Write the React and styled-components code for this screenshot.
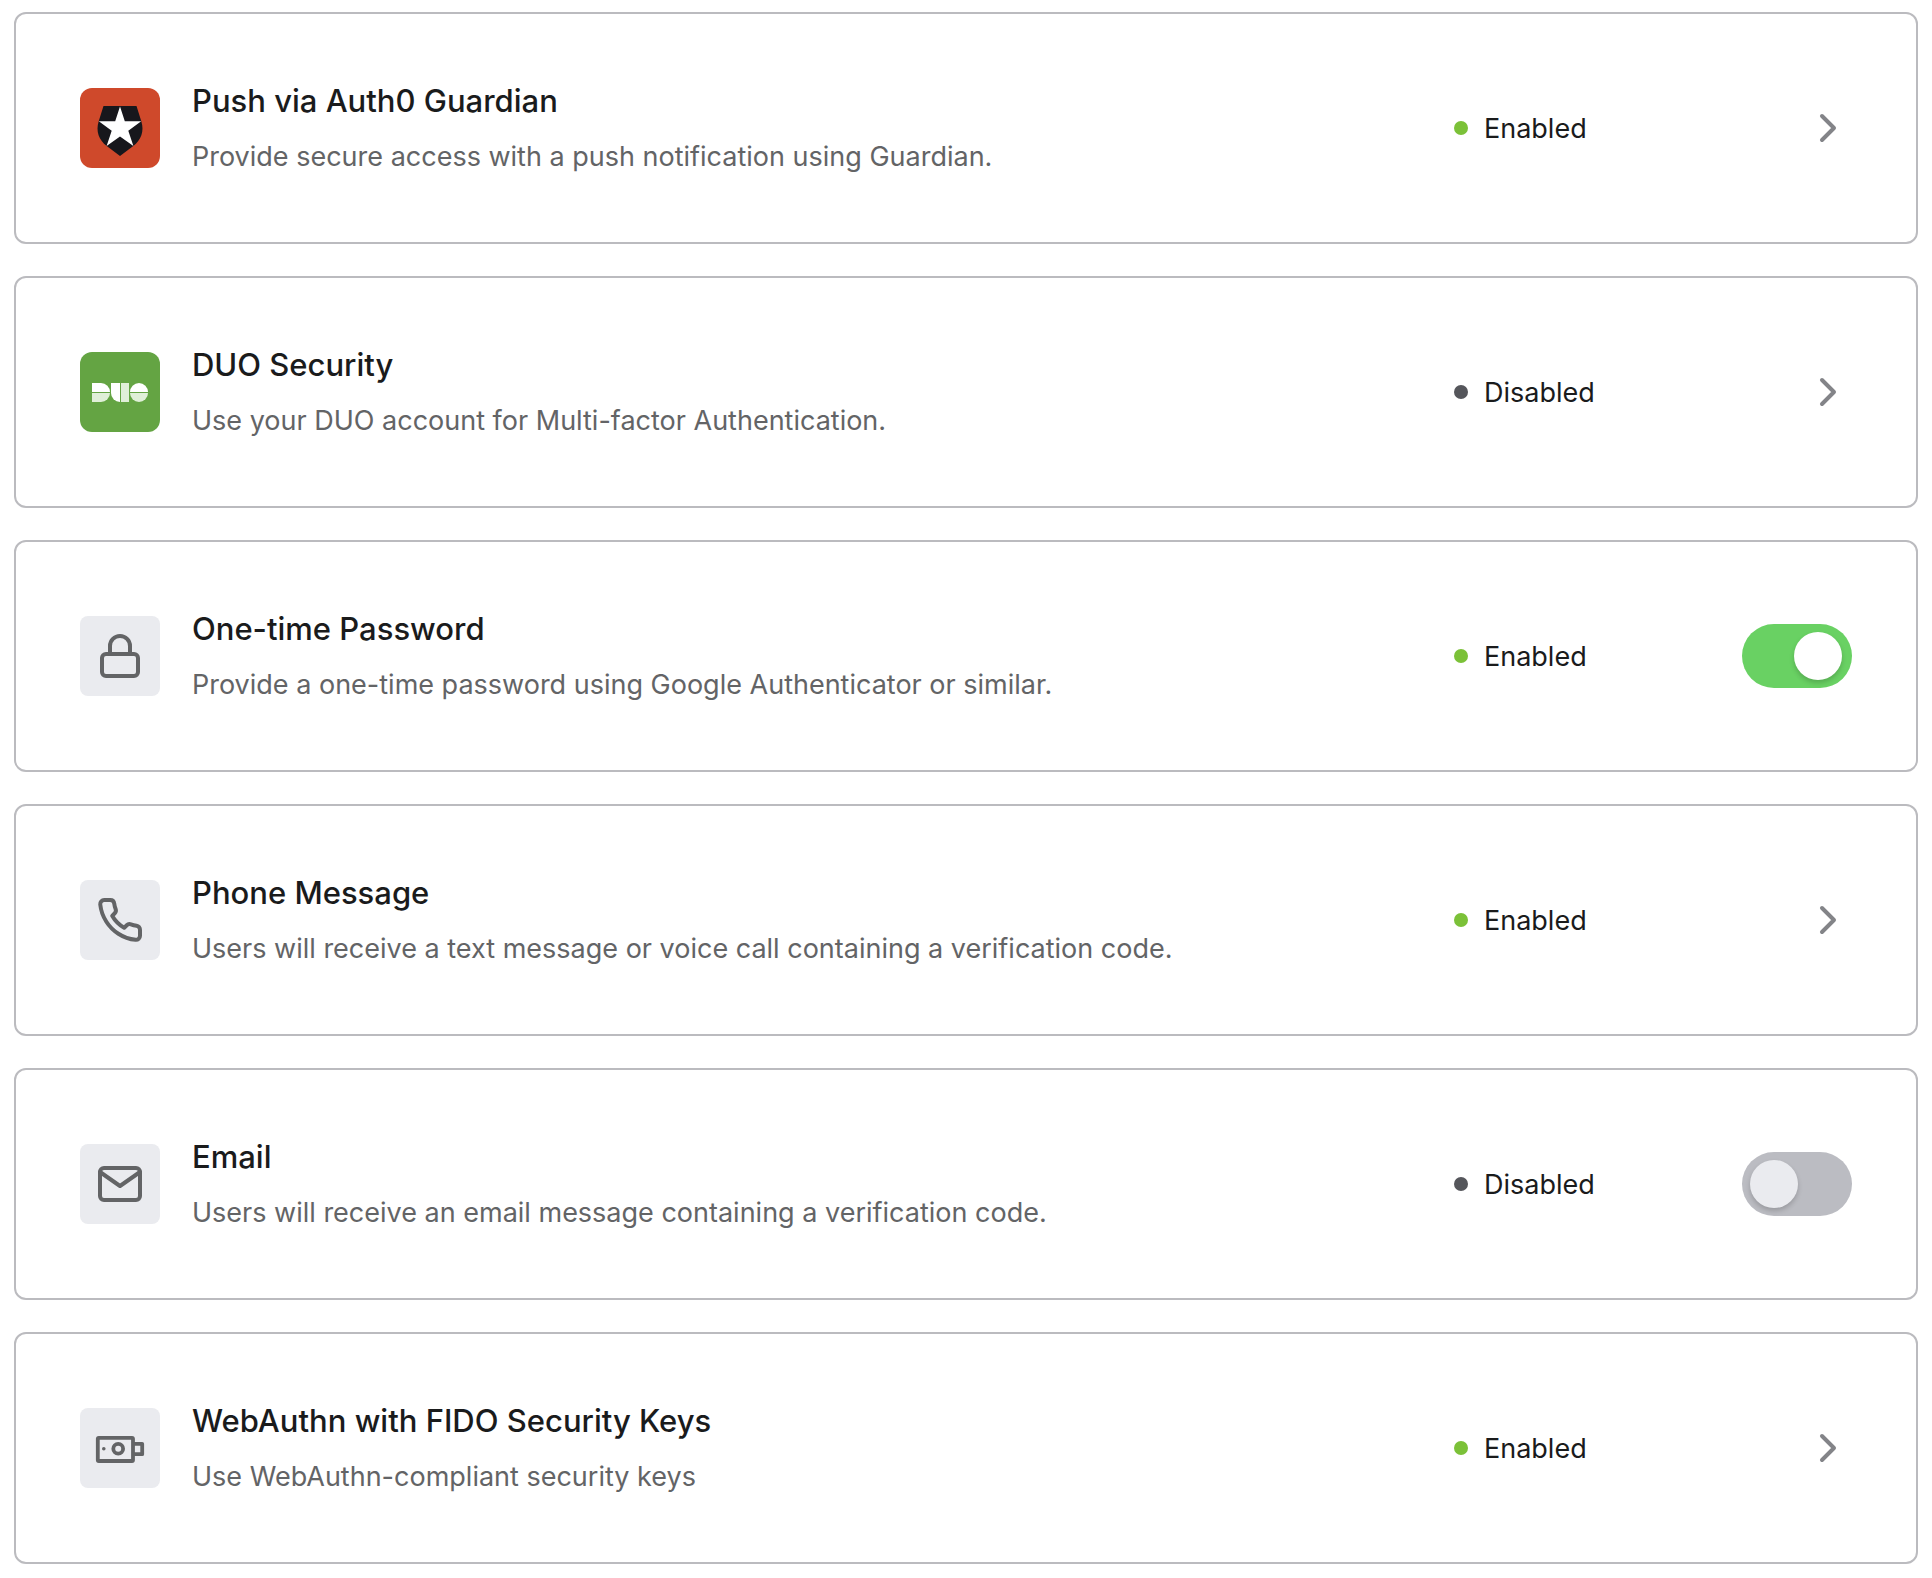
import React, { useState } from 'react';
import { FiChevronRight, FiLock, FiMail, FiPhone } from 'react-icons/fi';
import styled, { createGlobalStyle } from 'styled-components';

const GlobalStyle = createGlobalStyle`
  body {
    background-color: #fff;
    color: #1a1b1c;
    font-family: Inter, 'Liberation Sans', sans-serif;
    margin: 0;
  }
`;

const FactorList = styled.ul`
  display: flex;
  flex-direction: column;
  gap: 32px;
  list-style: none;
  margin: 0;
  padding: 12px 14px 14px;
`;

const Card = styled.li`
  align-items: center;
  border: 2px solid #bbbbbf;
  border-radius: 12px;
  display: flex;
  padding: 64px;
`;

const Tile = styled.div`
  align-items: center;
  background-color: ${props => props.$background || '#eaebef'};
  border-radius: ${props => (props.$background ? 12 : 8)}px;
  color: #636466;
  display: flex;
  flex: none;
  font-size: 48px;
  height: 80px;
  justify-content: center;
  margin-right: 32px;
  width: 80px;
`;

const Details = styled.div`
  display: flex;
  flex: 1;
  flex-direction: column;
  gap: 12px;

  h2 {
    font-size: 31px;
    font-weight: 500;
    line-height: 46px;
    margin: 0;
  }

  p {
    color: #636466;
    font-size: 27px;
    line-height: 42px;
    margin: 0;
  }
`;

const Status = styled.div`
  align-items: center;
  display: flex;
  flex: none;
  font-size: 27px;
  gap: 16px;
  width: 288px;

  &::before {
    background-color: ${props => (props.$enabled ? '#7bc138' : '#55565b')};
    border-radius: 50%;
    content: '';
    height: 14px;
    width: 14px;
  }
`;

const Action = styled.div`
  display: flex;
  flex: none;
  justify-content: flex-end;
  width: 110px;
`;

const SettingsLink = styled.a`
  color: #838488;
  display: flex;
  font-size: 48px;
`;

const Switch = styled.input`
  appearance: none;
  background-color: #bbbcc2;
  border-radius: 32px;
  cursor: pointer;
  display: flex;
  height: 64px;
  margin: 0;
  padding: 8px;
  width: 110px;

  &::before {
    background-color: #eaebef;
    border-radius: 50%;
    box-shadow: 0 3px 5px rgba(0, 0, 0, 0.18);
    content: '';
    height: 48px;
    width: 48px;
  }

  &:checked {
    background-color: #69d163;
    justify-content: flex-end;
    padding-right: 10px;
  }

  &:checked::before {
    background-color: #fff;
  }
`;

const DuoMark = styled.div`
  display: grid;
  gap: 1px;
  grid-template-columns: 18px 9px 8px 18px;
  grid-template-rows: 9px 9px;
`;

const DuoPiece = styled.span`
  background-color: ${props => (props.$light ? '#e0efd8' : '#fff')};
  border-radius: ${props => props.$radius || 0};
  grid-row: ${props => (props.$tall ? 'span 2' : 'auto')};
`;

const DuoLogo = () => (
  <DuoMark>
    <DuoPiece $radius="0 9px 0 0" />
    <DuoPiece $tall $radius="0 0 0 9px" />
    <DuoPiece $tall $light />
    <DuoPiece $radius="9px 9px 0 0" />
    <DuoPiece $light $radius="0 0 9px 0" />
    <DuoPiece $light $radius="0 0 9px 9px" />
  </DuoMark>
);

const GuardianLogo = () => (
  <svg width="80" height="80" viewBox="0 0 80 80" aria-hidden="true">
    <path
      fill="#17171c"
      d="M23.5 18h33l4.8 15.3c3.2 10-.3 19-8 24.7L40 68 26.7 58c-7.7-5.7-11.2-14.7-8-24.7z"
    />
    <path
      fill="#fff"
      d="M40 18.5l4.8 14.8h16.4L48.3 42.8 53.4 58 40 48.6 26.6 58l5.1-15.2-12.9-9.5h16.4z"
    />
  </svg>
);

const SecurityKeyIcon = () => (
  <svg
    width="80"
    height="80"
    viewBox="0 0 80 80"
    fill="none"
    stroke="currentColor"
    strokeWidth="3.8"
    strokeLinejoin="round"
    aria-hidden="true"
  >
    <rect x="17.8" y="29.8" width="35.2" height="23.2" rx="1" />
    <path d="M54 35.8h8.2v10.4H54" />
    <circle cx="38.2" cy="40.8" r="4.9" />
    <circle cx="23.8" cy="40.8" r="1.8" fill="currentColor" stroke="none" />
  </svg>
);

const factors = [
  {
    id: 'push',
    name: 'Push via Auth0 Guardian',
    description: 'Provide secure access with a push notification using Guardian.',
    icon: <GuardianLogo />,
    background: '#cf492b',
    enabled: true
  },
  {
    id: 'duo',
    name: 'DUO Security',
    description: 'Use your DUO account for Multi-factor Authentication.',
    icon: <DuoLogo />,
    background: '#64a443',
    enabled: false
  },
  {
    id: 'otp',
    name: 'One-time Password',
    description: 'Provide a one-time password using Google Authenticator or similar.',
    icon: <FiLock />,
    enabled: true,
    toggle: true
  },
  {
    id: 'phone',
    name: 'Phone Message',
    description:
      'Users will receive a text message or voice call containing a verification code.',
    icon: <FiPhone />,
    enabled: true
  },
  {
    id: 'email',
    name: 'Email',
    description: 'Users will receive an email message containing a verification code.',
    icon: <FiMail />,
    enabled: false,
    toggle: true
  },
  {
    id: 'webauthn',
    name: 'WebAuthn with FIDO Security Keys',
    description: 'Use WebAuthn-compliant security keys',
    icon: <SecurityKeyIcon />,
    enabled: true
  }
];

const Factor = ({ id, name, description, icon, background, toggle, ...props }) => {
  const [enabled, setEnabled] = useState(props.enabled);

  return (
    <Card>
      <Tile $background={background}>{icon}</Tile>
      <Details>
        <h2 id={`${id}-name`}>{name}</h2>
        <p>{description}</p>
      </Details>
      <Status $enabled={enabled}>{enabled ? 'Enabled' : 'Disabled'}</Status>
      <Action>
        {toggle ? (
          <Switch
            type="checkbox"
            role="switch"
            aria-labelledby={`${id}-name`}
            checked={enabled}
            onChange={e => setEnabled(e.target.checked)}
          />
        ) : (
          <SettingsLink href={`#${id}`} aria-labelledby={`${id}-name`}>
            <FiChevronRight />
          </SettingsLink>
        )}
      </Action>
    </Card>
  );
};

export default () => (
  <>
    <GlobalStyle />
    <FactorList>
      {factors.map(factor => (
        <Factor key={factor.id} {...factor} />
      ))}
    </FactorList>
  </>
);
